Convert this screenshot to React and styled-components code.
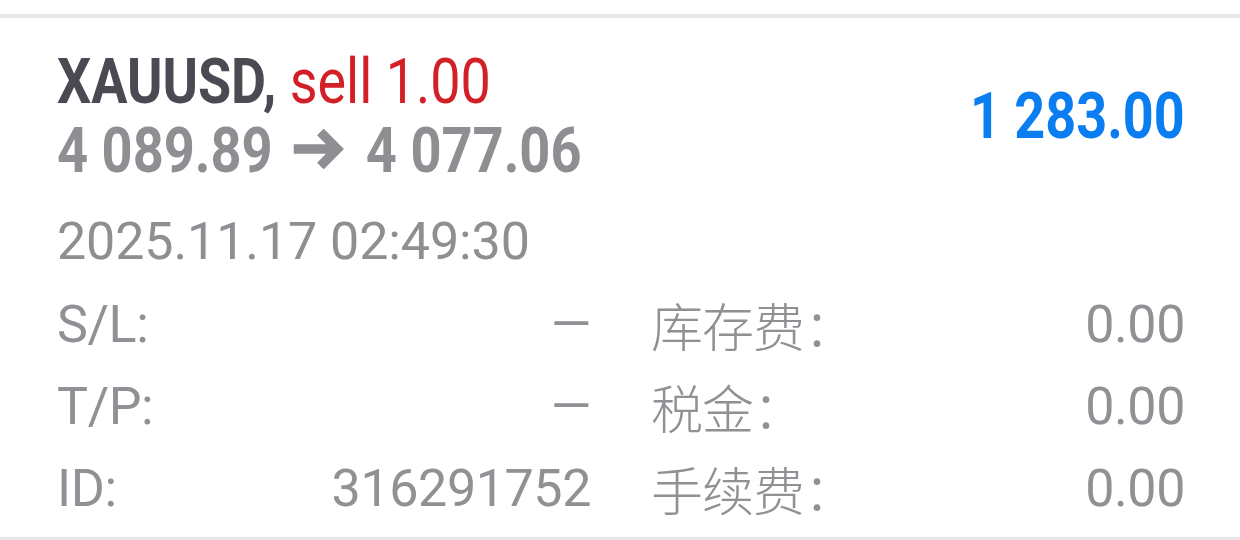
import styled, { createGlobalStyle } from "styled-components";

const GlobalStyle = createGlobalStyle`
    body {
        margin: 0;
        background: #ffffff;
        font-family: Roboto, "Noto Sans CJK SC", sans-serif;
    }
`

const rows = [
    { label: "S/L:", value: "—", extra: "库存费：", extraValue: "0.00" },
    { label: "T/P:", value: "—", extra: "税金：", extraValue: "0.00" },
    { label: "ID:", value: "316291752", extra: "手续费：", extraValue: "0.00" },
]

// heavy arrow between open and close price; drawn 59 wide so it ends up 51 after the squeeze
function ArrowIcon() {
    return (
        <ArrowSvg width="59" height="40" viewBox="0 0 51 40" preserveAspectRatio="none">
            <path d="M0 20H45" stroke="currentColor" strokeWidth="9.5" fill="none" />
            <path
                d="M27 3L44 20L27 37"
                stroke="currentColor"
                strokeWidth="9.5"
                strokeLinejoin="miter"
                fill="none"
            />
        </ArrowSvg>
    )
}

export default function App() {
    return (
        <Page>
            <GlobalStyle />
            <Divider />
            <Card>
                <Header>
                    <div>
                        <Title>
                            <Condensed $scale={0.855}>
                                XAUUSD, <Side>sell 1.00</Side>
                            </Condensed>
                        </Title>
                        <Prices>
                            <Condensed>
                                4 089.89 <ArrowIcon /> 4 077.06
                            </Condensed>
                        </Prices>
                    </div>
                    <Profit>
                        <Condensed $right $scale={0.83}>1 283.00</Condensed>
                    </Profit>
                </Header>
                <Time>2025.11.17 02:49:30</Time>
                <Grid>
                    {rows.map((r) => (
                        <Row key={r.label}>
                            <Cell>
                                <span>{r.label}</span>
                                <span>{r.value}</span>
                            </Cell>
                            <Cell>
                                <Cjk>{r.extra}</Cjk>
                                <span>{r.extraValue}</span>
                            </Cell>
                        </Row>
                    ))}
                </Grid>
            </Card>
            <Divider />
        </Page>
    )
}

const Page = styled.div`
    padding-top: 14px;
`

const Divider = styled.div`
    height: 4px;
    background: #e7e7e7;
`

const Card = styled.section`
    padding: 29px 55px 7px 57px;
`

const Header = styled.div`
    display: flex;
    justify-content: space-between;
    align-items: center;
`

const Condensed = styled.span`
    display: inline-block;
    white-space: nowrap;
    transform: scaleX(${(p) => p.$scale || 0.86});
    transform-origin: ${(p) => (p.$right ? "right" : "left")} center;
`

const Title = styled.div`
    font-size: 63px;
    line-height: 69px;
    font-weight: 700;
    color: #4a4a52;
`

const Side = styled.span`
    font-weight: 400;
    color: #d32027;
`

const Prices = styled(Title)`
    color: #8e8e93;
`

const ArrowSvg = styled.svg`
    vertical-align: 3px;
    margin: 0 9px;
`

const Profit = styled.div`
    font-size: 65px;
    line-height: 69px;
    font-weight: 700;
    color: #0a7ef0;
`

const Time = styled.div`
    margin-top: 27px;
    font-size: 52px;
    line-height: 60px;
    letter-spacing: -0.1px;
    color: #8e8e93;
`

const Grid = styled.div`
    margin-top: 12px;
`

const Row = styled.div`
    display: grid;
    grid-template-columns: 1fr 1fr;
    column-gap: 60px;
    font-size: 52px;
    line-height: 82px;
    letter-spacing: -0.4px;
    color: #909095;
`

const Cell = styled.div`
    display: flex;
    justify-content: space-between;
`

const Cjk = styled.span`
    font-family: "Noto Sans CJK SC", sans-serif;
    font-weight: 300;
    font-size: 52px;
    letter-spacing: -1px;
`
